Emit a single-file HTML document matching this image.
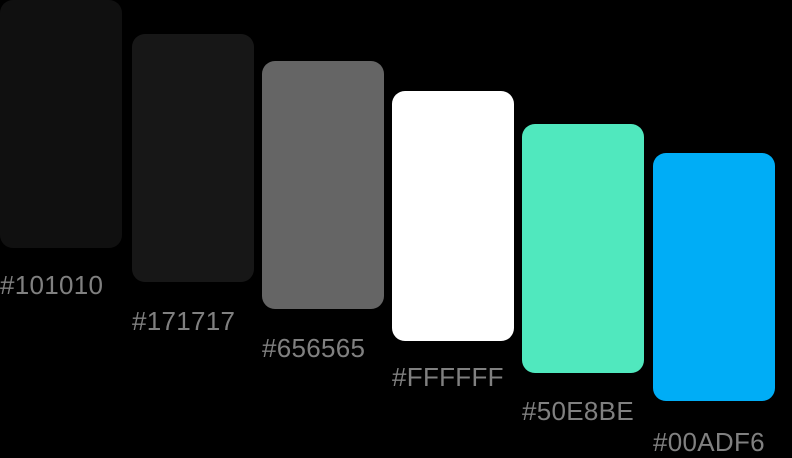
<!DOCTYPE html>
<html><head><style>
html,body{margin:0;padding:0;background:#000;width:792px;height:458px;overflow:hidden;position:relative;font-family:"Liberation Sans",sans-serif}
.s{position:absolute;width:122px;height:248px;border-radius:13px}
.t{position:absolute;font-size:26px;color:#808080;line-height:1;letter-spacing:0.3px}
</style></head><body>
<div class="s" style="left:0;top:0;background:#101010"></div>
<div class="s" style="left:132px;top:34px;background:#171717"></div>
<div class="s" style="left:262px;top:61px;background:#656565"></div>
<div class="s" style="left:392px;top:91px;background:#fff;height:250px"></div>
<div class="s" style="left:522px;top:124px;background:#50E8BE;height:249px"></div>
<div class="s" style="left:653px;top:153px;background:#00ADF6"></div>
<div class="t" style="left:0;top:272px">#101010</div>
<div class="t" style="left:132px;top:308px">#171717</div>
<div class="t" style="left:262px;top:335px">#656565</div>
<div class="t" style="left:392px;top:364px">#FFFFFF</div>
<div class="t" style="left:522px;top:398px">#50E8BE</div>
<div class="t" style="left:653px;top:429px">#00ADF6</div>
</body></html>
